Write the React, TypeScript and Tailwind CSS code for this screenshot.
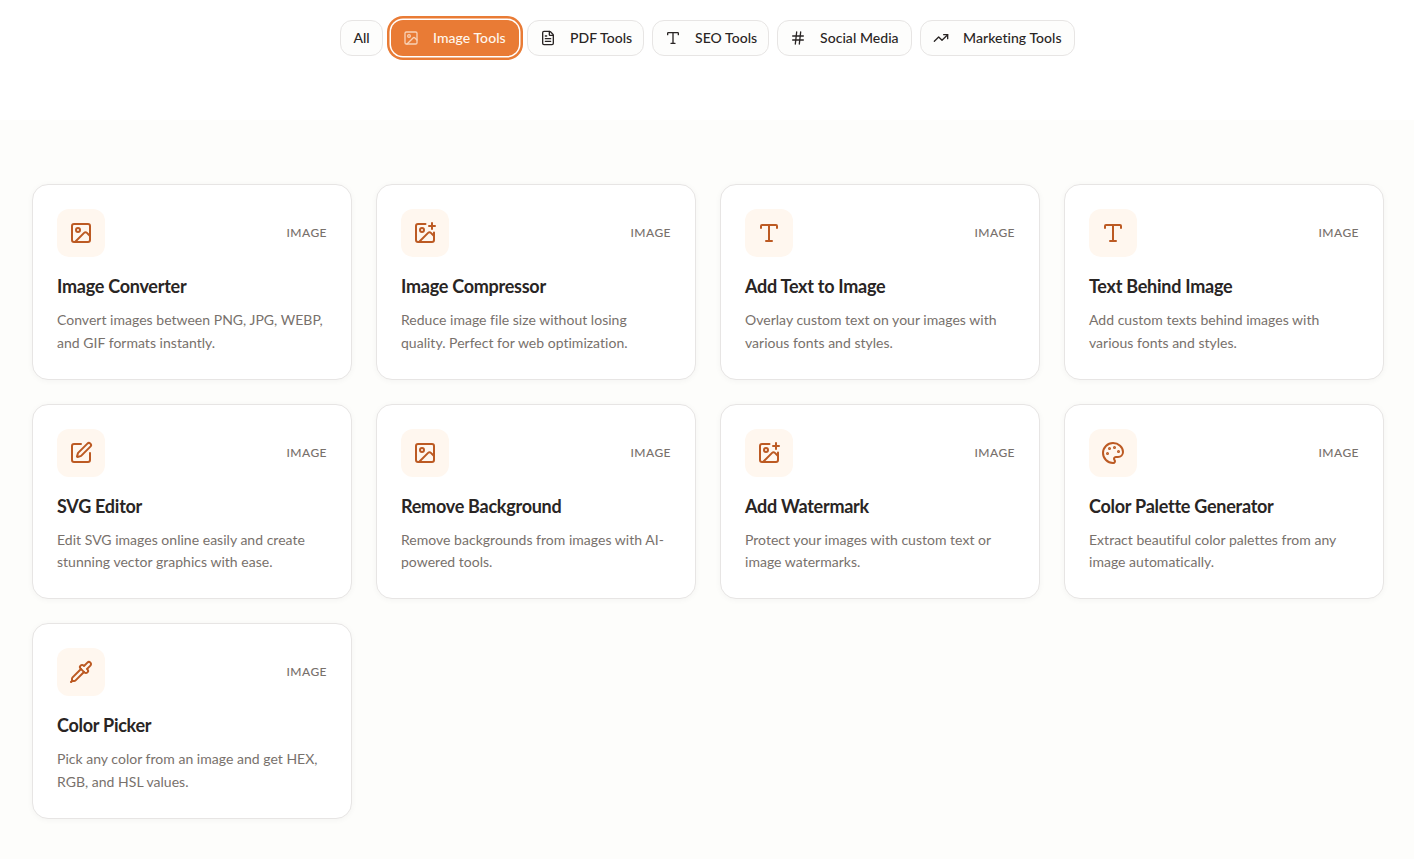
import { FileText, Hash, Image, ImagePlus, Palette, Pipette, SquarePen, TrendingUp, Type } from 'lucide-react';

const filters = [
  { label: 'Image Tools', icon: Image, active: true, width: 'w-[128px]' },
  { label: 'PDF Tools', icon: FileText, width: 'w-[117px]' },
  { label: 'SEO Tools', icon: Type, width: 'w-[117px]' },
  { label: 'Social Media', icon: Hash, width: 'w-[135px]' },
  { label: 'Marketing Tools', icon: TrendingUp, width: 'w-[155px]' },
];

const tools = [
  { title: 'Image Converter', desc: 'Convert images between PNG, JPG, WEBP, and GIF formats instantly.', icon: Image },
  { title: 'Image Compressor', desc: 'Reduce image file size without losing quality. Perfect for web optimization.', icon: ImagePlus },
  { title: 'Add Text to Image', desc: 'Overlay custom text on your images with various fonts and styles.', icon: Type },
  { title: 'Text Behind Image', desc: 'Add custom texts behind images with various fonts and styles.', icon: Type },
  { title: 'SVG Editor', desc: 'Edit SVG images online easily and create stunning vector graphics with ease.', icon: SquarePen },
  { title: 'Remove Background', desc: 'Remove backgrounds from images with AI-powered tools.', icon: Image },
  { title: 'Add Watermark', desc: 'Protect your images with custom text or image watermarks.', icon: ImagePlus },
  { title: 'Color Palette Generator', desc: 'Extract beautiful color palettes from any image automatically.', icon: Palette },
  { title: 'Color Picker', desc: 'Pick any color from an image and get HEX, RGB, and HSL values.', icon: Pipette },
];

export default function App() {
  return (
    <div className="min-h-screen bg-white font-['Lato',sans-serif] text-[#292524]">
      {/* Filter pills */}
      <div className="flex h-[120px] items-start justify-center gap-2 pt-5">
        <button className="h-9 w-[43px] rounded-xl border border-[#e7e5e4] bg-[#fdfdfc] pl-px text-sm font-medium">All</button>
        {filters.map((f) => (
          <button
            key={f.label}
            className={
              f.active
                ? `flex h-9 ${f.width} items-center gap-[14.5px] whitespace-nowrap rounded-xl bg-[#e97b35] pl-3 text-sm font-medium tracking-[0.05px] text-[#fff7ed] ring-[2.5px] ring-[#e97b35] ring-offset-[1.5px]`
                : `flex h-9 ${f.width} items-center gap-[14.5px] whitespace-nowrap rounded-xl border border-[#e7e5e4] bg-[#fdfdfc] pl-3 text-sm font-medium tracking-[0.05px]`
            }
          >
            <f.icon size={16} strokeWidth={2} className={f.active ? 'opacity-70' : ''} />
            {f.label}
          </button>
        ))}
      </div>

      {/* Tool cards */}
      <div className="min-h-[739px] bg-[#fdfdfb] pt-16 pl-8 pb-10">
        <div className="grid grid-cols-[repeat(4,320px)] gap-6">
          {tools.map((t) => (
            <div key={t.title} className="rounded-2xl border border-[#e7e5e4] bg-white p-6 shadow-[0_1px_6px_rgba(0,0,0,0.04)]">
              <div className="mb-4 flex items-center justify-between">
                <div className="flex h-12 w-12 items-center justify-center rounded-xl bg-[#fff7ef]">
                  <t.icon size={24} strokeWidth={2} className="text-[#bc5a23]" />
                </div>
                <span className="text-xs font-medium tracking-[0.45px] text-[#78716c]">IMAGE</span>
              </div>
              <h3 className="mb-[10px] text-lg font-bold leading-[26px] tracking-[-0.26px]">{t.title}</h3>
              <p className="text-sm leading-[22.75px] tracking-[0.02px] text-[#78716c]">{t.desc}</p>
            </div>
          ))}
        </div>
      </div>
    </div>
  );
}
